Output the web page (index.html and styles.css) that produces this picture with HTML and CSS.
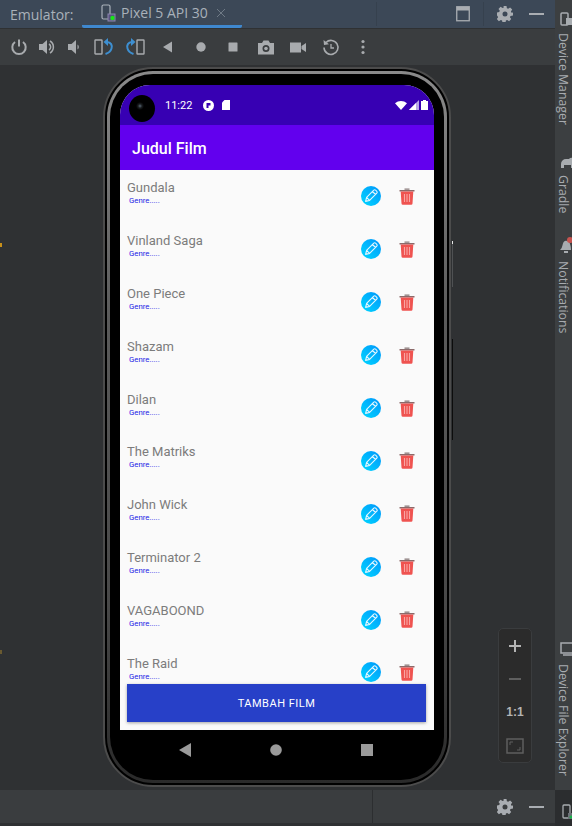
FILE: index.html
```html
<!DOCTYPE html>
<html lang="en">
<head>
    <meta charset="UTF-8">
    <meta name="viewport" content="width=device-width, initial-scale=1.0">
    <title>Emulator - Pixel 5 API 30</title>
    <link rel="stylesheet" href="styles.css">
</head>
<body>
    <svg class="defs" width="0" height="0">
        <defs>
            <linearGradient id="edit-fill" x1="0" y1="1" x2="1" y2="0">
                <stop offset="0" stop-color="#00d8ff"/>
                <stop offset="1" stop-color="#0095fb"/>
            </linearGradient>
            <symbol id="edit" viewBox="0 0 20 20">
                <circle cx="10" cy="10" r="10" fill="url(#edit-fill)"/>
                <path d="M4.6 15.4l1-4L12.8 4.2a1.3 1.3 0 0 1 1.8 0l1.2 1.2a1.3 1.3 0 0 1 0 1.8L8.6 14.400zM5.600 11.400l3 3M11.500 5.500l3 3" fill="none" stroke="#e4f7ff" stroke-width="1.100" stroke-linejoin="round"/>
            </symbol>
            <symbol id="trash" viewBox="0 0 16 17">
                <path d="M5.500 1.800V.5h5v1.300z" fill="#8a7a7a"/>
                <path d="M.5 2h15v1.500H.5z" fill="#8c6a6a"/>
                <path d="M1.700 3.500h12.600l-.8 12a1.300 1.300 0 0 1-1.300 1.200H3.800a1.300 1.300 0 0 1-1.300-1.200z" fill="#ef5350"/>
                <path d="M5.500 6v8M8 6v8M10.500 6v8" stroke="#f9a5a3" stroke-width="1.100"/>
            </symbol>
            <symbol id="gear" viewBox="0 0 16 16">
                <path fill-rule="evenodd" d="M6.500 0h3l.4 2.200 1.300.6 1.900-1.300 2.100 2.100-1.300 1.900.6 1.300L16 6.500v3l-2.500.4-.6 1.300 1.300 1.900-2.100 2.100-1.900-1.300-1.300.6-.4 2.500h-3l-.4-2.500-1.300-.6-1.900 1.300-2.100-2.100 1.300-1.900-.6-1.300L0 9.500v-3l2.200-.4.600-1.300-1.300-1.900 2.100-2.100 1.900 1.300 1.300-.6zM8 5.500a2.500 2.500 0 1 0 0 5 2.500 2.500 0 0 0 0-5z" fill="#a9adb2"/>
            </symbol>
        </defs>
    </svg>

    <div class="app">
        <div class="main">
            <header class="tabs">
                <span class="tabs-label">Emulator:</span>
                <div class="tab">
                    <svg class="tab-icon" width="16" height="18" viewBox="0 0 16 18">
                        <rect x="1" y="1" width="8" height="14" rx="1.500" fill="none" stroke="#a9b1ba" stroke-width="1.200"/>
                        <rect x="7" y="10" width="7" height="7" fill="#5a5480" stroke="#8c86b0"/>
                        <circle cx="11.500" cy="14" r="2.200" fill="#19e619"/>
                    </svg>
                    <span class="tab-name">Pixel 5 API 30</span>
                    <svg class="tab-close" width="10" height="10" viewBox="0 0 10 10">
                        <path d="M1 1l8 8M9 1l-8 8" stroke="#6f7a86" stroke-width="1"/>
                    </svg>
                </div>
                <div class="tabs-right">
                    <span class="tabs-sep tabs-sep-wide"></span>
                    <svg width="14" height="16" viewBox="0 0 14 16">
                        <rect x=".75" y=".75" width="12.500" height="14" fill="none" stroke="#a9adb2" stroke-width="1.300"/>
                        <rect x="1" y="1" width="12" height="3.500" fill="#a9adb2"/>
                    </svg>
                    <span class="tabs-sep"></span>
                    <svg width="16" height="16" viewBox="0 0 16 16"><use href="#gear"/></svg>
                    <span class="dash"></span>
                </div>
            </header>

            <div class="toolbar">
                <div class="tool-group tool-group-power">
                    <svg class="tool" viewBox="0 0 18 18"><path d="M9 1.500v7" stroke="#a8abae" stroke-width="2" fill="none"/><path d="M5 4a6.700 6.700 0 1 0 8 0" stroke="#a8abae" stroke-width="2" fill="none"/></svg>
                    <svg class="tool" viewBox="0 0 18 18"><path d="M1 6h3.500L9 2v14l-4.500-4H1z" fill="#a8abae"/><path d="M11 6a3.500 3.500 0 0 1 0 6M12 3a7 7 0 0 1 0 12" stroke="#a8abae" stroke-width="1.500" fill="none"/></svg>
                    <svg class="tool" viewBox="0 0 18 18"><path d="M3 6h3.500L11 2v14l-4.500-4H3zM12.500 6.500a3 3 0 0 1 0 5z" fill="#a8abae"/></svg>
                </div>
                <div class="tool-group tool-group-rotate">
                    <svg class="tool tool-wide" viewBox="0 0 20 18"><rect x="1" y="2" width="7" height="14" rx=".5" fill="none" stroke="#a8abae" stroke-width="1.400"/><path d="M13 4c4 0 5.500 3.500 4.500 6.500-.7 2.500-3 4.500-6 5.500" fill="none" stroke="#3d8fd1" stroke-width="2"/><path d="M14 0l-4.500 4L14 8z" fill="#3d8fd1"/></svg>
                    <svg class="tool tool-wide" viewBox="0 0 20 18"><rect x="12" y="2" width="7" height="14" rx=".5" fill="none" stroke="#a8abae" stroke-width="1.400"/><path d="M7 4C3 4 1.500 7.500 2.500 10.500c.7 2.500 3 4.500 6 5.500" fill="none" stroke="#3d8fd1" stroke-width="2"/><path d="M6 0l4.500 4L6 8z" fill="#3d8fd1"/></svg>
                </div>
                <div class="tool-group tool-group-rest">
                    <svg class="tool" viewBox="0 0 18 18"><path d="M13 3.500v11L4 9z" fill="#a8abae"/></svg>
                    <svg class="tool" viewBox="0 0 18 18"><circle cx="9" cy="9" r="4.700" fill="#a8abae"/></svg>
                    <svg class="tool" viewBox="0 0 18 18"><rect x="4.500" y="4.500" width="9" height="9" rx=".5" fill="#a8abae"/></svg>
                    <svg class="tool" viewBox="0 0 18 18"><path fill-rule="evenodd" d="M1 5h4l1.500-2.500h5L13 5h4v11.500H1zM9 7a3.500 3.500 0 1 0 0 7 3.500 3.500 0 0 0 0-7z" fill="#a8abae"/><circle cx="9" cy="10.500" r="1.800" fill="#a8abae"/></svg>
                    <svg class="tool" viewBox="0 0 18 18"><path d="M1 4.500h11v10H1zM12.500 8l4.500-3v9l-4.500-3z" fill="#a8abae"/></svg>
                    <svg class="tool" viewBox="0 0 18 18"><path d="M4 4.500A7 7 0 1 1 2 9.500" fill="none" stroke="#a8abae" stroke-width="1.600"/><path d="M1.500 2l.5 5 5-.8z" fill="#a8abae"/><path d="M9 6v4h3" fill="none" stroke="#a8abae" stroke-width="1.300"/></svg>
                    <svg class="tool" viewBox="0 0 18 18"><circle cx="9" cy="3.500" r="1.600" fill="#a8abae"/><circle cx="9" cy="9" r="1.600" fill="#a8abae"/><circle cx="9" cy="14.500" r="1.600" fill="#a8abae"/></svg>
                </div>
            </div>

            <div class="stage">
                <span class="edge-mark edge-mark-top"></span>
                <span class="edge-mark edge-mark-bottom"></span>
                <div class="phone">
                    <span class="side-key side-key-power"></span>
                    <span class="side-key side-key-volume"></span>
                    <div class="phone-band">
                        <div class="phone-inner">
                            <div class="screen">
                                <div class="statusbar">
                                    <span class="camera"></span>
                                    <span class="clock">11:22</span>
                                    <svg width="11" height="11" viewBox="0 0 11 11"><circle cx="5.500" cy="5.500" r="5.500" fill="#fff"/><path d="M3.500 3h4v2.500H5.500V8h-2z" fill="#3700b3"/></svg>
                                    <svg width="8" height="10" viewBox="0 0 8 10"><path d="M2.500 0H8v10H0V2.500z" fill="#fff"/></svg>
                                    <div class="status-right">
                                        <svg width="12" height="9" viewBox="0 0 12 9"><path d="M0 2.200a9.500 9.500 0 0 1 12 0L6 9z" fill="#fff"/></svg>
                                        <svg width="10" height="10" viewBox="0 0 10 10"><path d="M10 0v10H0z" fill="#b9a8e6"/><path d="M7 3v7H0z" fill="#fff"/></svg>
                                        <svg width="7" height="10" viewBox="0 0 7 10"><path d="M2 0h3v1h2v9H0V1h2z" fill="#fff"/></svg>
                                    </div>
                                </div>
                                <div class="appbar">Judul Film</div>
                                <main class="film-list">
                                    <div class="film">
                                        <div class="film-text"><div class="film-title">Gundala</div><div class="film-genre">Genre.....</div></div>
                                        <svg class="btn-edit"><use href="#edit"/></svg>
                                        <svg class="btn-trash"><use href="#trash"/></svg>
                                    </div>
                                    <div class="film">
                                        <div class="film-text"><div class="film-title">Vinland Saga</div><div class="film-genre">Genre.....</div></div>
                                        <svg class="btn-edit"><use href="#edit"/></svg>
                                        <svg class="btn-trash"><use href="#trash"/></svg>
                                    </div>
                                    <div class="film">
                                        <div class="film-text"><div class="film-title">One Piece</div><div class="film-genre">Genre.....</div></div>
                                        <svg class="btn-edit"><use href="#edit"/></svg>
                                        <svg class="btn-trash"><use href="#trash"/></svg>
                                    </div>
                                    <div class="film">
                                        <div class="film-text"><div class="film-title">Shazam</div><div class="film-genre">Genre.....</div></div>
                                        <svg class="btn-edit"><use href="#edit"/></svg>
                                        <svg class="btn-trash"><use href="#trash"/></svg>
                                    </div>
                                    <div class="film">
                                        <div class="film-text"><div class="film-title">Dilan</div><div class="film-genre">Genre.....</div></div>
                                        <svg class="btn-edit"><use href="#edit"/></svg>
                                        <svg class="btn-trash"><use href="#trash"/></svg>
                                    </div>
                                    <div class="film">
                                        <div class="film-text"><div class="film-title">The Matriks</div><div class="film-genre">Genre.....</div></div>
                                        <svg class="btn-edit"><use href="#edit"/></svg>
                                        <svg class="btn-trash"><use href="#trash"/></svg>
                                    </div>
                                    <div class="film">
                                        <div class="film-text"><div class="film-title">John Wick</div><div class="film-genre">Genre.....</div></div>
                                        <svg class="btn-edit"><use href="#edit"/></svg>
                                        <svg class="btn-trash"><use href="#trash"/></svg>
                                    </div>
                                    <div class="film">
                                        <div class="film-text"><div class="film-title">Terminator 2</div><div class="film-genre">Genre.....</div></div>
                                        <svg class="btn-edit"><use href="#edit"/></svg>
                                        <svg class="btn-trash"><use href="#trash"/></svg>
                                    </div>
                                    <div class="film">
                                        <div class="film-text"><div class="film-title">VAGABOOND</div><div class="film-genre">Genre.....</div></div>
                                        <svg class="btn-edit"><use href="#edit"/></svg>
                                        <svg class="btn-trash"><use href="#trash"/></svg>
                                    </div>
                                    <div class="film">
                                        <div class="film-text"><div class="film-title">The Raid</div><div class="film-genre">Genre.....</div></div>
                                        <svg class="btn-edit"><use href="#edit"/></svg>
                                        <svg class="btn-trash"><use href="#trash"/></svg>
                                    </div>
                                </main>
                                <button class="add-btn">TAMBAH FILM</button>
                            </div>
                            <nav class="navbar">
                                <svg width="12" height="14" viewBox="0 0 12 14"><path d="M12 0v14L0 7z" fill="#9a9a9a"/></svg>
                                <svg width="12" height="12" viewBox="0 0 12 12"><circle cx="6" cy="6" r="5.800" fill="#9a9a9a"/></svg>
                                <svg width="12" height="12" viewBox="0 0 12 12"><rect width="12" height="12" fill="#9a9a9a"/></svg>
                            </nav>
                        </div>
                    </div>
                </div>

                <div class="zoom-box">
                    <svg width="14" height="14" viewBox="0 0 14 14"><path d="M7 1v12M1 7h12" stroke="#b4b4b4" stroke-width="2"/></svg>
                    <svg width="14" height="14" viewBox="0 0 14 14"><path d="M1 7h12" stroke="#5f5f5f" stroke-width="2"/></svg>
                    <span class="zoom-one">1:1</span>
                    <svg width="18" height="16" viewBox="0 0 18 16"><rect x="1" y="1" width="16" height="14" fill="none" stroke="#5f5f5f" stroke-width="1.500"/><path d="M4 7V4h3M14 9v3h-3" fill="none" stroke="#5f5f5f"/></svg>
                </div>
            </div>

            <footer class="statusline">
                <span class="statusline-sep"></span>
                <svg width="16" height="16" viewBox="0 0 16 16"><use href="#gear"/></svg>
                <span class="dash"></span>
            </footer>
        </div>

        <aside class="side">
            <div class="strip">
                <div class="strip-top">
                    <div class="strip-item strip-dm">
                        <svg width="14" height="14" viewBox="0 0 14 14"><rect x="1" y="1" width="7" height="12" rx="1" fill="none" stroke="#a8acb0" stroke-width="1.500"/><rect x="6" y="6" width="8" height="7" fill="#a8acb0"/></svg>
                        <span class="strip-text">Device Manager</span>
                    </div>
                    <div class="strip-item strip-gradle">
                        <svg width="14" height="11" viewBox="0 0 14 11"><path d="M1 11V7a5 5 0 0 1 5-5h3a3 3 0 0 1 5 0v9h-3V8H4v3z" fill="#a8acb0"/></svg>
                        <span class="strip-text">Gradle</span>
                    </div>
                    <div class="strip-item strip-notif">
                        <svg width="14" height="17" viewBox="0 0 14 17"><path d="M0 13c3-2 2-8 5-9 4-1 6 3 6 9zM4 14h4v2H4z" fill="#a8acb0"/><circle cx="10" cy="3" r="3" fill="#c75450"/></svg>
                        <span class="strip-text">Notifications</span>
                    </div>
                </div>
                <div class="strip-item strip-dfe">
                    <svg width="14" height="15" viewBox="0 0 14 15"><rect x="1" y="1" width="13" height="10" fill="none" stroke="#a8acb0" stroke-width="1.500"/><path d="M3 13h11" stroke="#a8acb0" stroke-width="1.500"/></svg>
                    <span class="strip-text">Device File Explorer</span>
                </div>
            </div>
            <div class="side-corner">
                <svg width="14" height="16" viewBox="0 0 14 16"><rect x="1" y="1" width="7" height="13" rx="1" fill="none" stroke="#a8acb0" stroke-width="1.300"/><rect x="6" y="9" width="8" height="6" fill="#6d7278"/><circle cx="9" cy="13" r="1.500" fill="#19b34a"/></svg>
            </div>
        </aside>
    </div>
</body>
</html>
```

FILE: styles.css
```css
* {
    box-sizing: border-box;
}

body {
    margin: 0;
    font-family: 'Roboto', sans-serif;
    background-color: #2f3133;
}

.defs {
    position: absolute;
}

.app {
    display: flex;
    width: 572px;
    height: 826px;
    overflow: hidden;
}

.main {
    display: flex;
    flex: none;
    flex-direction: column;
    width: 555px;
}

/* top tab bar */
.tabs {
    display: flex;
    align-items: center;
    height: 28px;
    padding-left: 10px;
    background-color: #3c4857;
    color: #a9b1ba;
    font-family: 'Open Sans', sans-serif;
    font-size: 14px;
}

.tabs-label {
    width: 72px;
}

.tab {
    display: flex;
    align-items: center;
    width: 160px;
    height: 28px;
    padding-left: 19px;
    border-bottom: 3px solid #3f88cf;
    border-radius: 0 0 2px 2px;
}

.tab-icon {
    flex: none;
    margin-right: 4px;
}

.tab-name {
    white-space: nowrap;
}

.tab-close {
    flex: none;
    margin-left: 8px;
}

.tabs-right {
    display: flex;
    align-items: center;
    margin-left: auto;
    height: 28px;
}

.tabs-sep {
    width: 1px;
    height: 24px;
    margin: 0 13px;
    background-color: #36414e;
}

.tabs-sep-wide {
    margin: 0 79px 0 0;
}

.dash {
    width: 15px;
    height: 2px;
    margin: 0 11px 0 16px;
    background-color: #a9adb2;
}

/* emulator toolbar */
.toolbar {
    display: flex;
    align-items: center;
    height: 37px;
    padding-left: 10px;
    background-color: #3a3d3f;
    border-top: 1px solid #2f3133;
}

.tool-group {
    display: flex;
    align-items: center;
}

.tool-group-power {
    gap: 9.500px;
}

.tool-group-rotate {
    gap: 11px;
    margin-left: 11px;
}

.tool-group-rest {
    gap: 14.500px;
    margin-left: 14px;
}

.tool {
    flex: none;
    width: 18px;
    height: 18px;
}

.tool-wide {
    width: 20px;
}

/* device area */
.stage {
    position: relative;
    flex: 1;
    padding: 2px 0 0 103px;
    background-color: #2f3133;
}

.edge-mark {
    position: absolute;
    left: 0;
    width: 2px;
    height: 4px;
}

.edge-mark-top {
    top: 178px;
    background-color: #c8901a;
}

.edge-mark-bottom {
    top: 585px;
    background-color: #6a5a30;
}

.phone {
    position: relative;
    width: 348px;
    height: 720px;
    padding: 2px;
    background-color: #000;
    border: 2px solid #4c4c4c;
    border-radius: 50px;
}

.side-key {
    position: absolute;
    right: -4px;
    width: 1px;
}

.side-key-power {
    top: 172px;
    height: 46px;
    background-color: #4f5153;
    border-top: 3px solid #e8e8e8;
}

.side-key-volume {
    top: 270px;
    height: 101px;
    background-color: #0c0c0c;
}

.phone-band {
    height: 100%;
    padding: 3px;
    background: linear-gradient(#8a8a8a, #5a5a5a 35%, #484848 75%, #2a2a2a);
    border-radius: 46px;
}

.phone-inner {
    display: flex;
    flex-direction: column;
    height: 100%;
    padding: 11px 10px 0;
    background-color: #000;
    border-radius: 43px;
}

.screen {
    display: flex;
    flex-direction: column;
    flex: none;
    height: 645px;
    background-color: #fafafa;
    border-radius: 30px 30px 0 0;
    overflow: hidden;
}

.statusbar {
    position: relative;
    display: flex;
    align-items: center;
    flex: none;
    gap: 8px;
    height: 40px;
    padding: 0 6px 0 45px;
    background-color: #3700b3;
}

.camera {
    position: absolute;
    top: 10px;
    left: 9px;
    width: 26px;
    height: 27px;
    background: radial-gradient(circle at 11px 11px, #5a6a78 0, #1a1d20 2px, #000 4px);
    border-radius: 50%;
}

.clock {
    margin-right: 3px;
    color: #fff;
    font-size: 11px;
}

.status-right {
    display: flex;
    align-items: center;
    gap: 2px;
    margin-left: auto;
}

.appbar {
    flex: none;
    height: 45px;
    padding-left: 12px;
    background-color: #6200ee;
    color: #fff;
    font-size: 16px;
    font-weight: 500;
    line-height: 47px;
}

.film-list {
    flex: 1;
    min-height: 0;
    overflow: hidden;
}

.film {
    display: flex;
    align-items: center;
    height: 52.900px;
    padding-right: 19px;
}

.film-text {
    align-self: flex-start;
    flex: 1;
    padding: 10px 0 0 7px;
}

.film-title {
    color: #7c7c7c;
    font-size: 13px;
    line-height: 15px;
}

.film-genre {
    margin: 1px 0 0 2px;
    color: #1a1ae6;
    font-size: 7.800px;
    line-height: 10px;
}

.btn-edit {
    flex: none;
    width: 20px;
    height: 20px;
    margin-right: 18px;
}

.btn-trash {
    flex: none;
    width: 16px;
    height: 17px;
}

.add-btn {
    flex: none;
    height: 38px;
    margin: 0 8px 8px 7px;
    padding: 0;
    border: 0;
    background-color: #2740c8;
    color: #fff;
    font-family: 'Roboto', sans-serif;
    font-size: 11px;
    font-weight: 400;
    letter-spacing: .5px;
    box-shadow: 0 1px 3px rgba(0, 0, 0, .35);
}

.navbar {
    display: flex;
    align-items: center;
    justify-content: center;
    flex: none;
    gap: 79px;
    height: 40px;
    padding-right: 2px;
}

/* zoom overlay */
.zoom-box {
    position: absolute;
    top: 563px;
    left: 498px;
    display: flex;
    flex-direction: column;
    align-items: center;
    justify-content: space-between;
    width: 34px;
    height: 135px;
    padding: 10px 0 8px;
    background-color: #2b2b2b;
    border: 1px solid #3a3c3e;
    border-radius: 5px;
}

.zoom-one {
    color: #b4b4b4;
    font-family: 'Liberation Sans', sans-serif;
    font-size: 12px;
    font-weight: 700;
}

/* bottom bar */
.statusline {
    display: flex;
    align-items: center;
    justify-content: flex-end;
    flex: none;
    height: 33px;
    margin-bottom: 3px;
    background-color: #3a3d3f;
}

.statusline-sep {
    width: 1px;
    height: 33px;
    margin-right: 124px;
    background-color: #2c2e30;
}

/* right tool strip */
.side {
    display: flex;
    flex: none;
    flex-direction: column;
    width: 17px;
}

.strip {
    display: flex;
    flex-direction: column;
    justify-content: space-between;
    height: 790px;
    background-color: #3c3f41;
    color: #a8acb0;
}

.side-corner {
    flex: 1;
    padding: 14px 0 0 7px;
    background-color: #2b2d2f;
    overflow: hidden;
}

.strip-top {
    display: flex;
    flex-direction: column;
}

.strip-item {
    display: flex;
    flex-direction: column;
    align-items: flex-start;
    gap: 7px;
}

.strip-item svg {
    flex: none;
    margin-left: 5px;
}

.strip-dm {
    padding-top: 12px;
}

.strip-gradle {
    padding-top: 32px;
}

.strip-notif {
    padding-top: 24px;
}

.strip-dfe {
    padding-bottom: 14px;
}

.strip-text {
    writing-mode: vertical-rl;
    font-family: 'Open Sans', sans-serif;
    font-size: 12.300px;
    line-height: 17px;
    white-space: nowrap;
}
```
